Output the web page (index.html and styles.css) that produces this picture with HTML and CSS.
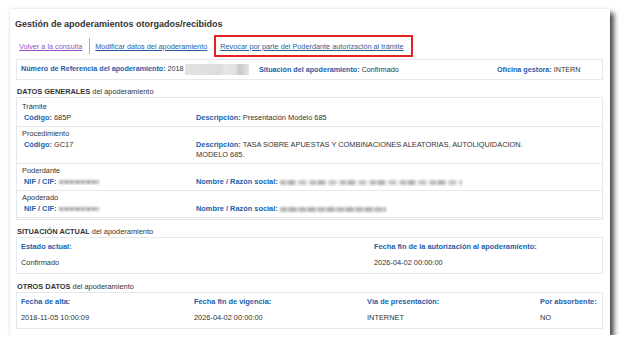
FILE: index.html
```html
<!DOCTYPE html>
<html lang="es">
<head>
<meta charset="utf-8">
<title>Gestión de apoderamientos</title>
<link rel="stylesheet" href="styles.css">
</head>
<body>
<div class="card">
  <h1 class="title">Gestión de apoderamientos otorgados/recibidos</h1>
  <div class="links">
    <a class="link visited" href="#">Volver a la consulta</a>
    <span class="sep"></span>
    <a class="link" href="#">Modificar datos del apoderamiento</a>
    <span class="highlight"><a class="link" href="#">Revocar por parte del Poderdante autorización al trámite</a></span>
  </div>
  <div class="refbox">
    <div class="nowrap"><b class="lbl">Número de Referencia del apoderamiento:</b> 2018<span class="blur blur-ref"></span></div>
    <div class="nowrap"><b class="lbl">Situación del apoderamiento:</b> Confirmado</div>
    <div class="nowrap"><b class="lbl">Oficina gestora:</b> INTERN</div>
  </div>

  <div class="sechead"><b>DATOS GENERALES</b> del apoderamiento</div>
  <div class="box general">
    <div class="row">
      <div class="rowtitle">Trámite</div>
      <div class="fields">
        <div><b class="lbl">Código:</b> 685P</div>
        <div><b class="lbl">Descripción:</b> Presentación Modelo 685</div>
      </div>
    </div>
    <div class="row">
      <div class="rowtitle">Procedimiento</div>
      <div class="fields">
        <div><b class="lbl">Código:</b> GC17</div>
        <div><b class="lbl">Descripción:</b> TASA SOBRE APUESTAS Y COMBINACIONES ALEATORIAS, AUTOLIQUIDACION.<br>MODELO 685.</div>
      </div>
    </div>
    <div class="row">
      <div class="rowtitle">Poderdante</div>
      <div class="fields">
        <div><b class="lbl">NIF / CIF:</b> <span class="blur blur-nif"></span></div>
        <div><b class="lbl">Nombre / Razón social:</b> <span class="blur blur-name1"></span></div>
      </div>
    </div>
    <div class="row">
      <div class="rowtitle">Apoderado</div>
      <div class="fields">
        <div><b class="lbl">NIF / CIF:</b> <span class="blur blur-nif"></span></div>
        <div><b class="lbl">Nombre / Razón social:</b> <span class="blur blur-name2"></span></div>
      </div>
    </div>
  </div>

  <div class="sechead"><b>SITUACIÓN ACTUAL</b> del apoderamiento</div>
  <div class="box grid2">
    <b class="lbl">Estado actual:</b>
    <b class="lbl">Fecha fin de la autorización al apoderamiento:</b>
    <span class="val">Confirmado</span>
    <span class="val">2026-04-02 00:00:00</span>
  </div>

  <div class="sechead last"><b>OTROS DATOS</b> del apoderamiento</div>
  <div class="box grid4">
    <b class="lbl">Fecha de alta:</b>
    <b class="lbl">Fecha fin de vigencia:</b>
    <b class="lbl">Vía de presentación:</b>
    <b class="lbl">Por absorbente:</b>
    <span class="val">2018-11-05 10:00:09</span>
    <span class="val">2026-04-02 00:00:00</span>
    <span class="val">INTERNET</span>
    <span class="val">NO</span>
  </div>
</div>
</body>
</html>
```

FILE: styles.css
```css
* { box-sizing: border-box; }
html, body { margin: 0; background: #ffffff; }
body {
  padding: 9px 0 0 10px;
  font-family: "Liberation Sans", Arial, sans-serif;
  font-size: 7.4px;
  color: #333333;
}
.card {
  width: 600px;
  height: 326px;
  background: #ffffff;
  padding: 10px 7px 0 6px;
  box-shadow: 0 0 3px rgba(0,0,0,0.12), 4px 4px 5px rgba(0,0,0,0.7);
}
.title {
  margin: 0 0 0 -1px;
  font-size: 9px;
  line-height: 11px;
  font-weight: bold;
  color: #333333;
}
.links {
  margin-top: 5px;
  height: 22px;
  display: flex;
  align-items: center;
  padding-left: 3px;
  font-size: 7.3px;
}
.link {
  color: #2b5d9e;
  text-decoration: underline;
}
.link.visited { color: #9b4fc4; }
.sep {
  width: 1px;
  height: 16px;
  background: #8fb3d9;
  margin: 0 5px 0 7px;
}
.highlight {
  margin-left: 7px;
  height: 22px;
  display: flex;
  align-items: center;
  border: 2px solid #e52222;
  padding: 0 7px 0 4px;
}
.refbox {
  margin-top: 2px;
  height: 21px;
  border: 1px solid #e4e8ef;
  display: grid;
  grid-template-columns: 238px 238px 1fr;
  align-items: center;
  padding-left: 4px;
  font-size: 7.2px;
}
.nowrap { white-space: nowrap; }
.lbl {
  color: #1d5ea8;
  font-weight: bold;
}
.blur {
  display: inline-block;
  vertical-align: middle;
  filter: blur(1px);
}
.blur-ref {
  width: 64px;
  height: 11px;
  margin-left: 1px;
  background: linear-gradient(90deg, #e3e3e3 0%, #dcdcdc 55%, #e6e6e6 62%, #e2e2e2 78%, #c9c9c9 85%, #d4d4d4 92%, #e4e4e4 100%);
  filter: blur(0.6px);
}
.blur-nif {
  width: 40px;
  height: 4px;
  background: repeating-linear-gradient(90deg, #b3b3b3 0 4px, #d0d0d0 4px 6px, #a6a6a6 6px 9px, #cccccc 9px 11px);
}
.blur-name1 {
  width: 182px;
  height: 5px;
  background: repeating-linear-gradient(90deg, #bdbdbd 0 6px, #e0e0e0 6px 8px, #b3b3b3 8px 15px, #ececec 15px 19px, #c6c6c6 19px 26px, #f2f2f2 26px 30px);
}
.blur-name2 {
  width: 106px;
  height: 5px;
  background: repeating-linear-gradient(90deg, #bababa 0 7px, #dadada 7px 9px, #b2b2b2 9px 16px, #d6d6d6 16px 19px);
}
.sechead {
  margin: 7px 0 0 1px;
  line-height: 10px;
  color: #333333;
}
.sechead.last { margin-top: 8px; }
.box {
  border: 1px solid #e4e8ef;
}
.general { padding: 2px 0 1px; }
.row {
  padding: 2px 0 3px 5px;
  border-bottom: 1px solid #e4e8ef;
}
.rowtitle {
  line-height: 10px;
  color: #333333;
}
.fields {
  margin-top: 1px;
  padding-left: 2px;
  display: grid;
  grid-template-columns: 172px 1fr;
  line-height: 10px;
}
.grid2, .grid4 {
  display: grid;
  padding: 4px 0 5px 4px;
  line-height: 10px;
  row-gap: 6px;
}
.grid2 { grid-template-columns: 353px 1fr; }
.grid4 { grid-template-columns: 173px 173px 173px 1fr; }
.val { color: #333333; }
```
